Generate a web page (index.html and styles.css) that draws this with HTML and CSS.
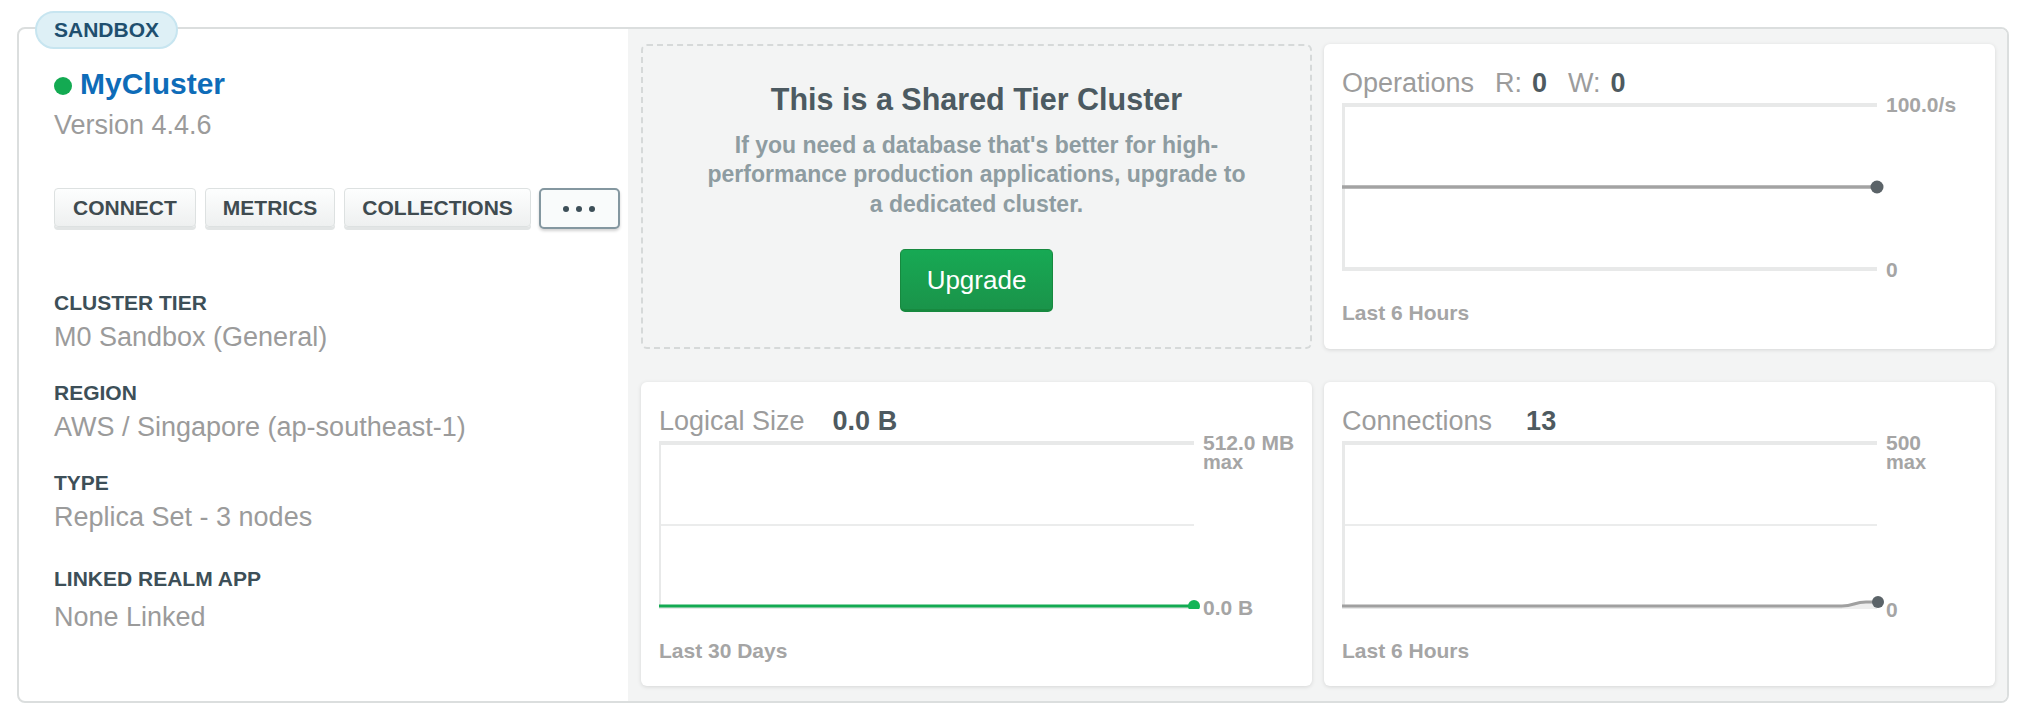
FILE: index.html
```html
<!DOCTYPE html>
<html lang="en">
<head>
<meta charset="utf-8">
<title>MyCluster</title>
<link rel="stylesheet" href="styles.css">
</head>
<body>
<div class="cluster">
  <span class="badge">SANDBOX</span>

  <section class="summary">
    <h1 class="name"><span class="status-dot"></span>MyCluster</h1>
    <div class="version">Version 4.4.6</div>
    <div class="actions">
      <button class="btn btn-wide">CONNECT</button>
      <button class="btn">METRICS</button>
      <button class="btn">COLLECTIONS</button>
      <button class="btn-more" aria-label="More"><span></span><span></span><span></span></button>
    </div>
    <dl class="details">
      <div class="detail"><dt>CLUSTER TIER</dt><dd>M0 Sandbox (General)</dd></div>
      <div class="detail"><dt>REGION</dt><dd>AWS / Singapore (ap-southeast-1)</dd></div>
      <div class="detail"><dt>TYPE</dt><dd>Replica Set - 3 nodes</dd></div>
      <div class="detail detail-last"><dt>LINKED REALM APP</dt><dd>None Linked</dd></div>
    </dl>
  </section>

  <section class="panels">
    <div class="upsell">
      <h2 class="upsell-title">This is a Shared Tier Cluster</h2>
      <p class="upsell-text">If you need a database that's better for high-performance production applications, upgrade to a dedicated cluster.</p>
      <button class="btn-upgrade">Upgrade</button>
    </div>

    <div class="metric">
      <div class="metric-title">
        <span>Operations</span>
        <span class="metric-key">R:</span><span class="metric-num">0</span>
        <span class="metric-key">W:</span><span class="metric-num">0</span>
      </div>
      <div class="chart">
        <svg class="plot" width="542" height="168" viewBox="0 0 542 168">
          <line x1="0" y1="2" x2="535" y2="2" stroke="#e8e9e9" stroke-width="4"/>
          <line x1="0" y1="166" x2="535" y2="166" stroke="#e8e9e9" stroke-width="4"/>
          <line x1="1.5" y1="0" x2="1.5" y2="168" stroke="#e8e9e9" stroke-width="3"/>
          <line x1="0" y1="84" x2="535" y2="84" stroke="#a3a3a3" stroke-width="3.5"/>
          <circle cx="535" cy="84" r="6.5" fill="#5b6368"/>
        </svg>
        <div class="axis">
          <span class="axis-top">100.0/s</span>
          <span>0</span>
        </div>
      </div>
      <div class="metric-range">Last 6 Hours</div>
    </div>

    <div class="metric">
      <div class="metric-title">
        <span>Logical Size</span>
        <span class="metric-big">0.0 B</span>
      </div>
      <div class="chart">
        <svg class="plot" width="542" height="168" viewBox="0 0 542 168">
          <line x1="0" y1="2" x2="535" y2="2" stroke="#e8e9e9" stroke-width="4"/>
          <line x1="0" y1="84" x2="535" y2="84" stroke="#ebecec" stroke-width="2"/>
          <line x1="0" y1="166" x2="535" y2="166" stroke="#e8e9e9" stroke-width="4"/>
          <line x1="1" y1="0" x2="1" y2="168" stroke="#e8e9e9" stroke-width="2"/>
          <line x1="0" y1="165" x2="532" y2="165" stroke="#13aa52" stroke-width="3"/>
          <circle cx="535" cy="165" r="6" fill="#13b556"/>
        </svg>
        <div class="axis">
          <span class="axis-top">512.0 MB<span class="axis-sub">max</span></span>
          <span>0.0 B</span>
        </div>
      </div>
      <div class="metric-range">Last 30 Days</div>
    </div>

    <div class="metric">
      <div class="metric-title">
        <span>Connections</span>
        <span class="metric-big metric-big-wide">13</span>
      </div>
      <div class="chart">
        <svg class="plot" width="542" height="168" viewBox="0 0 542 168">
          <line x1="0" y1="2" x2="535" y2="2" stroke="#e8e9e9" stroke-width="4"/>
          <line x1="0" y1="84" x2="535" y2="84" stroke="#ebecec" stroke-width="2"/>
          <line x1="0" y1="166" x2="535" y2="166" stroke="#e8e9e9" stroke-width="4"/>
          <line x1="1.5" y1="0" x2="1.5" y2="168" stroke="#e8e9e9" stroke-width="3"/>
          <path d="M500 165 C512 165 512 161 524 161 H532 V168 H500 Z" fill="#eeeeee"/>
          <path d="M0 165 H500 C512 165 512 161 524 161 H532" fill="none" stroke="#a0a0a0" stroke-width="3"/>
          <circle cx="536" cy="161" r="6" fill="#5b6368"/>
        </svg>
        <div class="axis">
          <span class="axis-top">500<span class="axis-sub">max</span></span>
          <span class="axis-low">0</span>
        </div>
      </div>
      <div class="metric-range">Last 6 Hours</div>
    </div>
  </section>
</div>
</body>
</html>
```

FILE: styles.css
```css
* {
  box-sizing: border-box;
}

body {
  margin: 0;
  background: #ffffff;
  font-family: "Liberation Sans", Arial, Helvetica, sans-serif;
}

.cluster {
  position: relative;
  display: flex;
  width: 1992px;
  height: 676px;
  margin: 27px 0 0 17px;
  border: 2px solid #dbdede;
  border-radius: 8px;
  background: #ffffff;
}

.badge {
  position: absolute;
  left: 16px;
  top: -18px;
  height: 38px;
  padding: 0 17px;
  border: 2px solid #c7e5f0;
  border-radius: 19px;
  background: #def0f6;
  color: #1f4f6f;
  font-size: 21px;
  font-weight: 700;
  line-height: 34px;
}

/* ---------- left summary ---------- */
.summary {
  flex: 0 0 609px;
  padding: 37px 0 0 35px;
}

.name {
  display: flex;
  align-items: flex-start;
  gap: 8px;
  margin: 0;
  font-size: 30px;
  line-height: 36px;
  font-weight: 700;
  color: #0e6cb8;
}

.status-dot {
  flex: none;
  width: 18px;
  height: 18px;
  margin-top: 11px;
  border-radius: 50%;
  background: #13aa52;
}

.version {
  margin-top: 7px;
  font-size: 27px;
  line-height: 32px;
  color: #9b9b9b;
}

.actions {
  display: flex;
  align-items: flex-start;
  gap: 9px;
  margin-top: 47px;
}

.btn {
  height: 39px;
  padding: 0 17px;
  border: 1px solid #dde1e1;
  border-radius: 4px;
  background: linear-gradient(#fdfefe, #eef0f0);
  box-shadow: 0 3px 0 #e2e5e5;
  font-family: inherit;
  font-size: 21px;
  font-weight: 700;
  line-height: 37px;
  color: #3f4b50;
}

.btn-wide {
  padding: 0 18px;
}

.btn-more {
  display: flex;
  align-items: center;
  justify-content: center;
  gap: 7px;
  width: 81px;
  height: 41px;
  margin-left: -1px;
  padding: 0;
  border: 2px solid #8497a0;
  border-radius: 5px;
  background: #f9fbfb;
  box-shadow: 0 2px 3px rgba(0, 0, 0, 0.18);
}

.btn-more span {
  width: 6px;
  height: 6px;
  border-radius: 50%;
  background: #3d4f58;
}

.details {
  margin: 61px 0 0;
}

.detail {
  margin-bottom: 27px;
}

.detail dt {
  font-size: 21px;
  font-weight: 700;
  line-height: 26px;
  color: #3d4f58;
}

.detail dd {
  margin: 5px 0 0;
  font-size: 27px;
  line-height: 32px;
  color: #9b9b9b;
}

.detail-last {
  margin-top: 33px;
}

.detail-last dd {
  margin-top: 9px;
}

/* ---------- right panels ---------- */
.panels {
  flex: 1;
  display: grid;
  grid-template-columns: 671px 671px;
  grid-template-rows: 305px 304px;
  gap: 33px 12px;
  padding: 15px 12px 15px 13px;
  background: #f3f4f4;
  border-radius: 0 6px 6px 0;
}

.upsell {
  display: flex;
  flex-direction: column;
  align-items: center;
  justify-content: center;
  border: 2px dashed #d6d9d9;
  border-radius: 6px;
  text-align: center;
}

.upsell-title {
  margin: 0;
  font-size: 30.5px;
  line-height: 36px;
  font-weight: 700;
  color: #4c5a61;
}

.upsell-text {
  max-width: 540px;
  margin: 14px 0 0;
  font-size: 23px;
  line-height: 29.5px;
  font-weight: 700;
  color: #8e9ca1;
}

.btn-upgrade {
  height: 63px;
  margin-top: 30px;
  padding: 0 26px;
  border: 1px solid #17893f;
  border-bottom-width: 3px;
  border-radius: 5px;
  background: linear-gradient(#17a954, #1a944a);
  color: #ffffff;
  font-family: inherit;
  font-size: 26px;
  line-height: 58px;
}

.metric {
  padding: 24px 18px 0;
  border-radius: 6px;
  background: #ffffff;
  box-shadow: 0 1px 4px rgba(0, 0, 0, 0.12);
}

.metric-title {
  display: flex;
  align-items: baseline;
  font-size: 27px;
  line-height: 30px;
  color: #9c9c9c;
  white-space: nowrap;
}

.metric-key {
  margin-left: 21px;
}

.metric-num {
  margin-left: 10px;
  font-weight: 700;
  color: #4e5a60;
}

.metric-big {
  margin-left: 28px;
  font-weight: 700;
  color: #4e5a60;
}

.metric-big-wide {
  margin-left: 34px;
}

.chart {
  display: flex;
  margin-top: -3px;
}

.plot {
  flex: none;
  display: block;
  margin: 8px 0 9px;
}

.axis {
  display: flex;
  flex-direction: column;
  justify-content: space-between;
  margin-left: 2px;
  font-size: 21px;
  font-weight: 700;
  line-height: 20px;
  color: #a5a5a5;
  white-space: nowrap;
}

.axis-top {
  display: flex;
  flex-direction: column;
}

.axis-sub {
  font-size: 20px;
  line-height: 18px;
}

.axis-low {
  transform: translateY(2px);
}

.metric-range {
  margin-top: 21px;
  font-size: 21px;
  font-weight: 700;
  line-height: 24px;
  color: #a5a5a5;
}
```
